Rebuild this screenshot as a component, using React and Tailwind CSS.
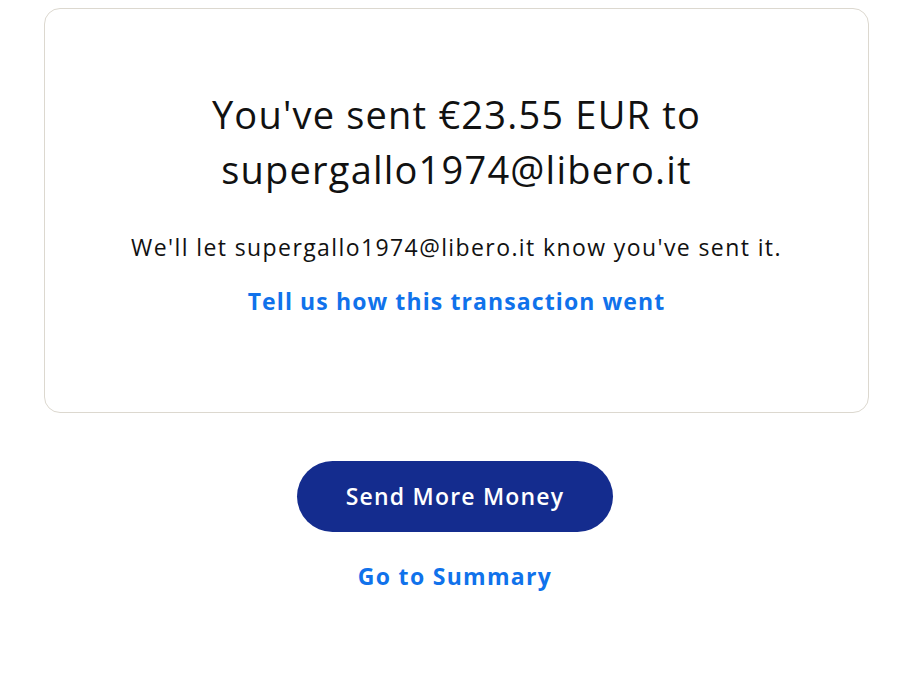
export default function App() {
  return (
    <div className="min-h-screen bg-white px-11 pt-2 font-['Open_Sans','Noto_Sans',sans-serif]">
      <div className="mx-auto w-[825px] rounded-2xl border border-[#dcd8cf] bg-white px-8 pt-[78px] pb-[95px] text-center">
        <h1 className="mx-auto max-w-[600px] text-[38px] leading-[55px] tracking-[1.2px] text-[#111111]">
          You've sent €23.55 EUR to supergallo1974@libero.it
        </h1>
        <p className="mt-[34px] text-[23px] leading-8 tracking-[1.4px] text-[#111111]">
          We'll let supergallo1974@libero.it know you've sent it.
        </p>
        <a href="#" className="mt-[22px] inline-block text-[23px] font-bold leading-8 tracking-[1.1px] text-[#1072eb]">
          Tell us how this transaction went
        </a>
      </div>

      <div className="mt-12 flex flex-col items-center">
        <button className="h-[71px] w-[316px] rounded-full bg-[#142c8e] text-[23px] font-semibold tracking-[1.2px] text-white">
          Send More Money
        </button>
        <a href="#" className="mt-[28px] text-[23px] font-bold leading-8 tracking-[1.3px] text-[#1072eb]">
          Go to Summary
        </a>
      </div>
    </div>
  );
}
